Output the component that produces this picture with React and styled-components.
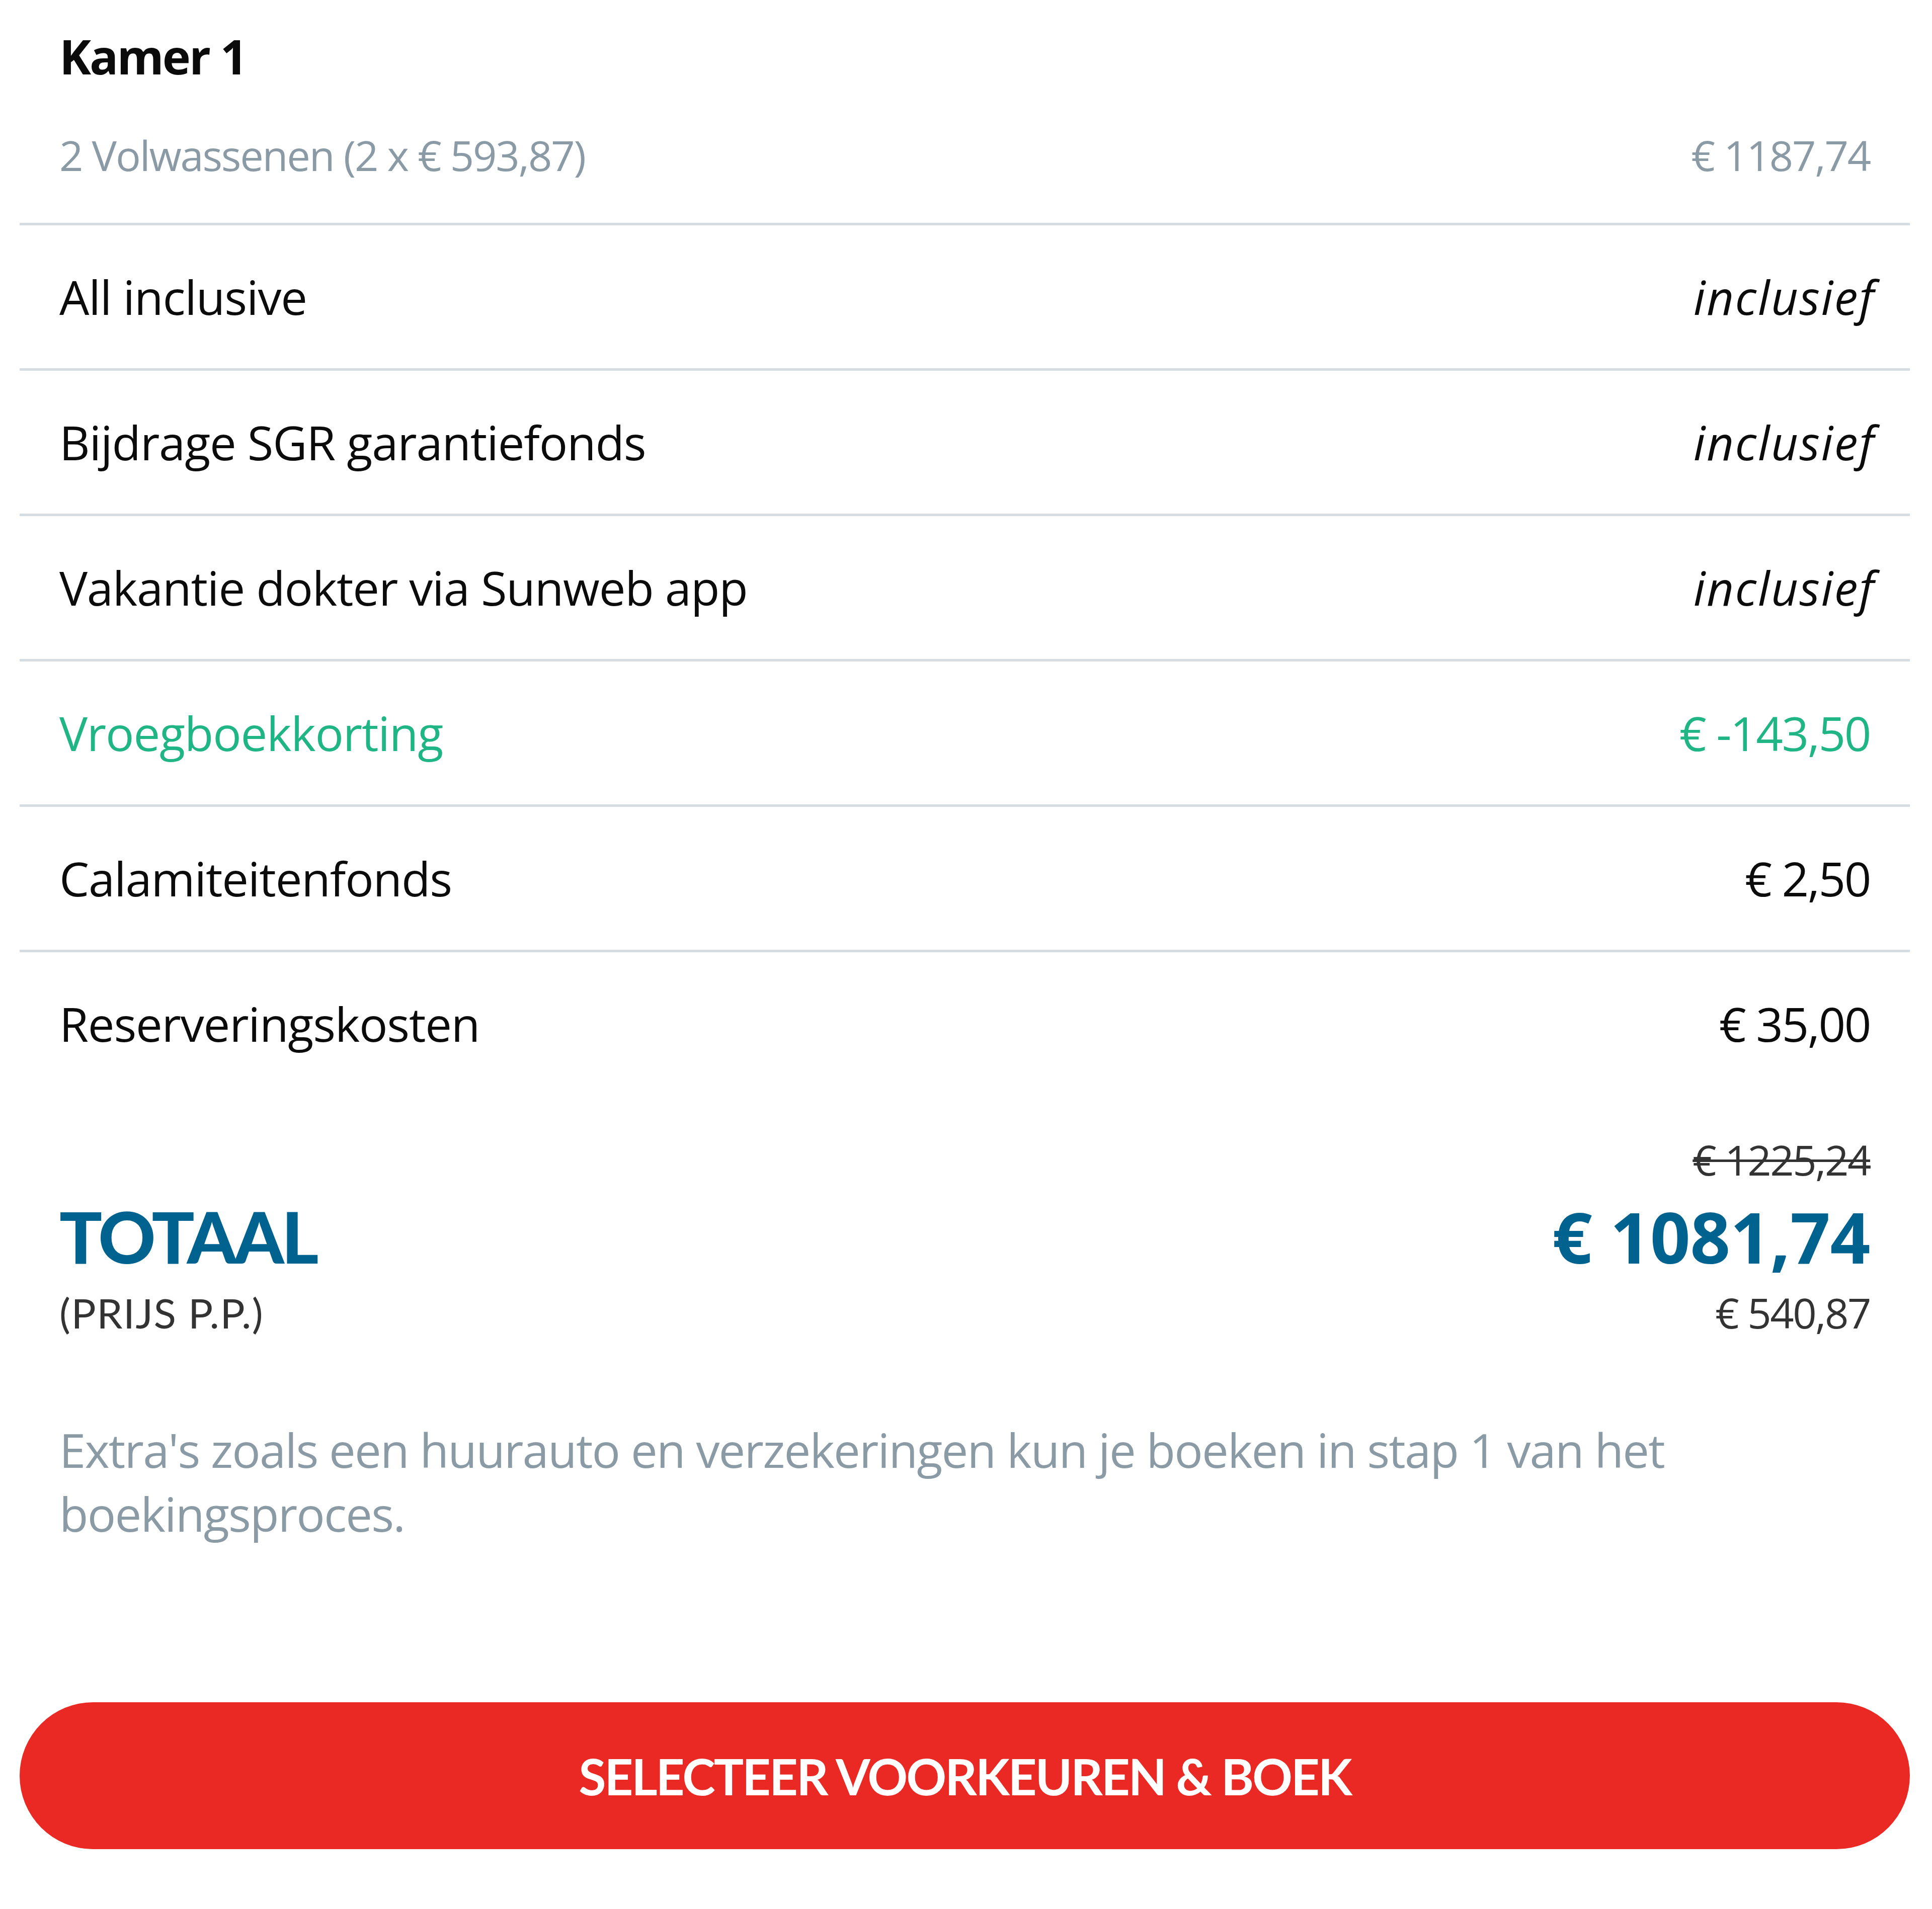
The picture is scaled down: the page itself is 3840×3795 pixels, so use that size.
import React from 'react'
import styled, { createGlobalStyle } from 'styled-components'

const BLACK = '#0b0b0b'
const GRAY = '#8a9ba5'
const LINE = '#d5dde2'
const GREEN = '#20b584'
const BLUE = '#00638f'
const DARK = '#333333'
const RED = '#ea2924'

const GlobalStyle = createGlobalStyle`
    html, body {
        margin: 0;
        padding: 0;
        background: #ffffff;
    }
    body {
        font-family: "Open Sans", "Liberation Sans", sans-serif;
        color: ${BLACK};
    }
`

const Page = styled.div`
    width: 3840px;
    padding: 49px 44px 118px 39px;
    box-sizing: border-box;
`
const Header = styled.div`
    padding: 0 79px 81px;
`
const Title = styled.div`
    font-size: 95px;
    line-height: 124px;
    font-weight: 700;
    letter-spacing: -3px;
`
const SubRow = styled.div`
    display: flex;
    justify-content: space-between;
    margin-top: 81px;
    font-size: 83px;
    line-height: 108px;
    letter-spacing: -2.2px;
    color: ${GRAY};
`
const Row = styled.div`
    display: flex;
    justify-content: space-between;
    align-items: center;
    height: 284px;
    padding: 0 79px;
    border-top: 5px solid ${LINE};
    font-size: 94px;
    line-height: 128px;
    letter-spacing: -1.2px;
    color: ${p => (p.$green ? GREEN : BLACK)};
`
const Value = styled.span`
    font-style: ${p => (p.$italic ? 'italic' : 'normal')};
    letter-spacing: ${p => (p.$italic ? '2.5px' : '-2.5px')};
    margin-right: ${p => (p.$italic ? '-10px' : '0')};
`
const Totals = styled.div`
    padding: 0 79px;
    margin-top: 78px;
`
const StrikeRow = styled.div`
    display: flex;
    justify-content: flex-end;
    font-size: 83px;
    line-height: 100px;
    letter-spacing: -2.5px;
    color: ${DARK};
    text-decoration: line-through;
    text-decoration-thickness: 5px;
`
const TotalRow = styled.div`
    display: flex;
    justify-content: space-between;
    align-items: baseline;
    margin-top: 28px;
    line-height: 150px;
    color: ${BLUE};
`
const TotalLabel = styled.span`
    font-family: Lato, "Open Sans", sans-serif;
    font-weight: 900;
    font-size: 141px;
    letter-spacing: -5px;
`
const TotalPrice = styled.span`
    font-weight: 700;
    font-size: 140px;
    letter-spacing: -0.5px;
`
const PerPersonRow = styled.div`
    display: flex;
    justify-content: space-between;
    align-items: baseline;
    margin-top: 26px;
    line-height: 100px;
    color: ${DARK};
`
const PerPersonLabel = styled.span`
    font-family: Lato, "Open Sans", sans-serif;
    font-size: 82px;
    letter-spacing: 1.5px;
`
const PerPersonPrice = styled.span`
    font-size: 83px;
    letter-spacing: -2.5px;
`
const Note = styled.p`
    margin: 160px 0 0;
    padding: 0 79px;
    font-size: 94px;
    line-height: 127px;
    letter-spacing: -1.8px;
    color: ${GRAY};
`
const BookButton = styled.button`
    display: flex;
    align-items: center;
    justify-content: center;
    width: 100%;
    height: 292px;
    margin-top: 311px;
    border: none;
    border-radius: 146px;
    background: ${RED};
    color: #ffffff;
    font-family: Lato, "Open Sans", sans-serif;
    font-weight: 700;
    font-size: 99px;
    letter-spacing: -3px;
    text-transform: uppercase;
    cursor: pointer;
`

const rows = [
    { label: 'All inclusive', value: 'inclusief', italic: true },
    { label: 'Bijdrage SGR garantiefonds', value: 'inclusief', italic: true },
    { label: 'Vakantie dokter via Sunweb app', value: 'inclusief', italic: true },
    { label: 'Vroegboekkorting', value: '€ -143,50', green: true },
    { label: 'Calamiteitenfonds', value: '€ 2,50' },
    { label: 'Reserveringskosten', value: '€ 35,00' }
]

export default function App() {
    return (
        <Page>
            <GlobalStyle />
            <Header>
                <Title>Kamer 1</Title>
                <SubRow>
                    <span>2 Volwassenen (2 x € 593,87)</span>
                    <span>€ 1187,74</span>
                </SubRow>
            </Header>
            {rows.map(row => (
                <Row key={row.label} $green={row.green}>
                    <span>{row.label}</span>
                    <Value $italic={row.italic}>{row.value}</Value>
                </Row>
            ))}
            <Totals>
                <StrikeRow>€ 1225,24</StrikeRow>
                <TotalRow>
                    <TotalLabel>TOTAAL</TotalLabel>
                    <TotalPrice>€ 1081,74</TotalPrice>
                </TotalRow>
                <PerPersonRow>
                    <PerPersonLabel>(PRIJS P.P.)</PerPersonLabel>
                    <PerPersonPrice>€ 540,87</PerPersonPrice>
                </PerPersonRow>
            </Totals>
            <Note>
                Extra's zoals een huurauto en verzekeringen kun je boeken in stap 1 van het boekingsproces.
            </Note>
            <BookButton>Selecteer voorkeuren &amp; boek</BookButton>
        </Page>
    )
}
